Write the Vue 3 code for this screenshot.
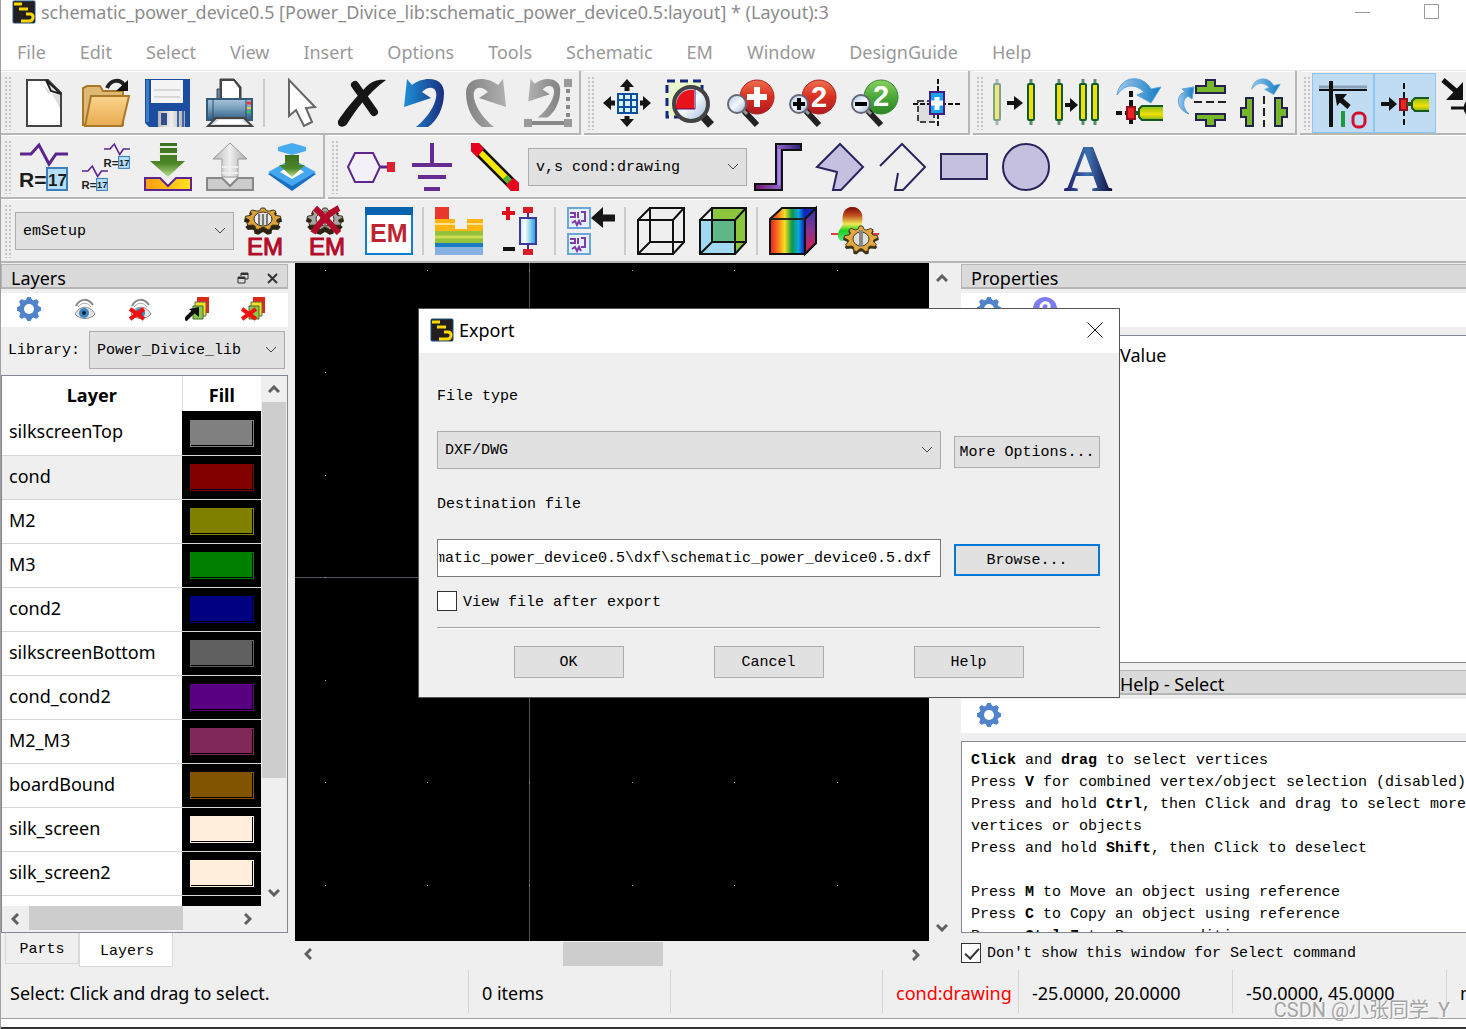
<script setup>
import { onMounted, ref } from 'vue'

const menus = ['File', 'Edit', 'Select', 'View', 'Insert', 'Options', 'Tools', 'Schematic', 'EM', 'Window', 'DesignGuide', 'Help']

// Outline of a cog wheel: n teeth between the root radii (inner share k) and the tip radii
const cog = (cx, cy, rx, ry, n, k) => {
  const pts = []
  for (let i = 0; i < n * 4; i++) {
    const angle = ((i - 0.5) / (n * 4)) * Math.PI * 2
    const r = i % 4 < 2 ? 1 : k
    pts.push(`${(cx + Math.sin(angle) * rx * r).toFixed(1)} ${(cy - Math.cos(angle) * ry * r).toFixed(1)}`)
  }
  return `M${pts.join('L')}Z`
}

const gear = (color) =>
  `<path d="${cog(12, 12, 12, 12, 8, 0.78)}" fill="${color}" stroke="${color}" stroke-width="1"/><circle cx="12" cy="12" r="5" fill="#fff"/>`

const emGear = (color) =>
  `<path d="${cog(22, 15, 18, 12, 9, 0.78)}" fill="#2c2412" stroke="#2c2412" stroke-width="2"/><path d="${cog(22, 12, 18, 11, 9, 0.78)}" fill="${color}" stroke="#3c3016" stroke-width="1"/><ellipse cx="22" cy="12" rx="9" ry="7" fill="#eee" stroke="#3c3016" stroke-width="1"/><path d="M17 7H27V18H17Z" fill="#777"/><path d="M20 6V18M24 6V18" stroke="#ddd" stroke-width="2"/>`

const lens = (sign) =>
  `<path d="M17 32L30 46" stroke="#222" stroke-width="6"/><path d="M15 30L20 35" stroke="#999" stroke-width="3"/><circle cx="10" cy="25" r="9" fill="url(#glass)" stroke="#667" stroke-width="2"/>${sign}`

const resistor = (x, y, s) =>
  `<g transform="translate(${x} ${y}) scale(${s})"><path d="M0 11H11L19 2L29 21L36 11H48" fill="none" stroke="#5c2590" stroke-width="3"/><rect x="27" y="25" width="20" height="22" fill="#b5dff8" stroke="#3c80c0" stroke-width="2"/><text x="-1" y="44" font-size="21" font-weight="700" fill="#1c1c1c">R=</text><text x="28" y="43" font-size="17" font-weight="700" fill="#1c1c1c">17</text></g>`

const strip = (x, o = 1) =>
  `<g opacity="${o}"><path d="M${x} 0V46" stroke="#5d8a6b" stroke-width="3"/><rect x="${x - 4}" y="4" width="8" height="38" rx="2" fill="#0c5c2c"/><rect x="${x - 2}" y="6" width="4" height="34" fill="#f5dd0a"/></g>`

const cubeLines = '<path d="M1 13H36V47H1ZM13 1H47V35H13ZM1 13L13 1M36 13L47 1M1 47L13 35M36 47L47 35" fill="none" stroke="#111" stroke-width="2"/>'
const chip = (y) =>
  `<rect x="1" y="${y}" width="22" height="20" fill="#e4f1fb" stroke="#6aa5dc" stroke-width="2"/><path d="M3 ${y + 5}H8V${y + 9}H3M11 ${y + 10}V${y + 4}M14 ${y + 4}H18V${y + 13}H14M5 ${y + 15}L8 ${y + 13}L10 ${y + 17}L12 ${y + 13}L14 ${y + 17}" fill="none" stroke="#7f3ca8" stroke-width="2"/>`
const undoShape = 'M7 0L12 6C23 -3 44 -3 44 14C44 29 37 42 28 48H16C29 38 38 22 36 13C34 7 27 8 22 13L31 19L4 28Z'
const swoopPath = 'M1 16C4 -4 27 -5 35 10L45 8L35 24L21 16L28 13C20 5 9 4 1 16Z'
const swoop = `<path d="${swoopPath}" fill="url(#sky)" stroke="#5ba4d8"/>`

const icons = {
  file: '<path d="M7 1H28L41 14V47H7Z" fill="#fff" stroke="#444" stroke-width="2"/><path d="M22 4L28 14L40 16V30C36 20 30 12 22 4Z" fill="#ddd"/><path d="M26 1L41 15L31 12Z" fill="#eee" stroke="#222" stroke-width="2"/>',
  open: '<path d="M1 46V9L5 7H18L21 12H41V46Z" fill="#dfb873" stroke="#a97828" stroke-width="2"/><path d="M9 17H47L40 47H3Z" fill="url(#folder)" stroke="#a97828" stroke-width="2"/><path d="M25 9C29 0 38 0 42 6" fill="none" stroke="#222" stroke-width="4"/><path d="M46 1V12H34Z" fill="#111"/>',
  save: '<path d="M1 0H46V48H5L1 44Z" fill="#1b4e9f"/><path d="M2 1H5V43H2Z" fill="#3f7cc8"/><path d="M7 1H39V24H7Z" fill="#f4f4f4"/><path d="M10 11H36M10 18H36" stroke="#bbb"/><path d="M14 32H41V48H14Z" fill="url(#silver)"/><path d="M17 34H23V46H17Z" fill="#334a8c"/><path d="M34 32V48M39 32V48" stroke="#4363aa" stroke-width="2"/>',
  print: '<path d="M11 20V10H14V0H28L35 8V20" fill="#5a87a8" stroke="#444" stroke-width="1"/><path d="M15 20V1H28L34 9V20Z" fill="#fff" stroke="#444" stroke-width="2"/><rect x="1" y="20" width="45" height="21" fill="url(#steel)" stroke="#345a78" stroke-width="2"/><path d="M7 20V40M40 20V40" stroke="#2b4a66"/><path d="M41 24H45" stroke="#f33" stroke-width="3"/><path d="M41 29H45" stroke="#ec3" stroke-width="2"/><path d="M41 33H45" stroke="#2c4" stroke-width="2"/><path d="M10 39H38L46 47H2Z" fill="#ddd" stroke="#444" stroke-width="2"/><path d="M13 41H36L40 45H8Z" fill="#fff"/>',
  cursor: '<path d="M13 1V37L20 31L28 47L36 43L30 29L39 28Z" fill="#fff" stroke="#666" stroke-width="2"/>',
  delete: '<path d="M17 6L36 33" fill="none" stroke="#161616" stroke-width="8" stroke-linecap="round"/><path d="M48 1C40 0 34 2 28 8C18 18 6 32 0 42C-1 49 6 49 9 45C17 32 30 14 48 1Z" fill="#161616"/>',
  undo: `<path d="${undoShape}" fill="url(#blue)"/>`,
  redo: `<path transform="translate(48 0) scale(-1 1)" d="${undoShape}" fill="url(#gray)"/>`,
  undoSel: `<path transform="translate(1 0) scale(.8)" d="${undoShape}" fill="url(#gray)"/><path d="M44 10V40" stroke="#888" stroke-width="4" stroke-dasharray="4 4"/><path d="M6 44H44" stroke="#888" stroke-width="4"/><path d="M40 0H48V8H40ZM40 40H48V48H40ZM0 40H8V48H0Z" fill="#999"/>`,
  fit: '<rect x="15" y="15" width="19" height="19" fill="#d8f4fa" stroke="#0d4ea0" stroke-width="2"/><path d="M21 15V34M28 15V34M15 21H34M15 28H34" stroke="#0d4ea0" stroke-width="2"/><path d="M24 12V5M24 37V44M12 24H5M37 24H44" stroke="#161616" stroke-width="5"/><path d="M24 0L31 8H17ZM24 48L17 40H31ZM0 24L8 17V31ZM48 24L40 31V17Z" fill="#161616"/>',
  zoomArea: '<rect x="2" y="2" width="35" height="36" fill="#eaf6cc" stroke="#142580" stroke-width="3" stroke-dasharray="8 5"/><path d="M37 36L46 46" stroke="#222" stroke-width="8"/><circle cx="26" cy="25" r="17" fill="url(#glass)" stroke="#444" stroke-width="4"/><path d="M29 30V11C18 9 10 18 11 30Z" fill="#e8121c"/><path d="M30 10V30H11" fill="none" stroke="#5a1060" stroke-width="1"/>',
  zoomIn: `<circle cx="30" cy="18" r="17" fill="url(#red)" stroke="#a22" stroke-width="1"/><path d="M30 8V28M20 18H40" stroke="#fff" stroke-width="6"/>${lens('')}`,
  zoomIn2: `<circle cx="30" cy="18" r="17" fill="url(#red)" stroke="#a22" stroke-width="1"/><text x="22" y="28" font-size="29" font-weight="700" fill="#fff">2</text>${lens('<path d="M10 19V31M4 25H16" stroke="#000" stroke-width="4"/>')}`,
  zoomOut2: `<circle cx="30" cy="18" r="17" fill="url(#green)" stroke="#383" stroke-width="1"/><text x="22" y="27" font-size="29" font-weight="700" fill="#fff">2</text>${lens('<path d="M4 25H16" stroke="#000" stroke-width="4"/>')}`,
  center: '<rect x="5" y="22" width="16" height="21" fill="#ddd" stroke="#444" stroke-width="2" stroke-dasharray="6 3"/><path d="M25 0V48M0 25H48" stroke="#111" stroke-width="2" stroke-dasharray="5 2"/><rect x="17" y="13" width="14" height="22" fill="#16a4ee" stroke="#4a1c80" stroke-width="2"/><path d="M24 18V31M18 24H30" stroke="#fff" stroke-width="5"/>',
  stripOne: `${strip(5, 0.5)}<path d="M15 24H24" stroke="#111" stroke-width="4"/><path d="M22 17L31 24L22 31Z" fill="#111"/>${strip(39)}`,
  stripTwo: `${strip(5)}<path d="M11 26H18" stroke="#111" stroke-width="4"/><path d="M16 19L24 26L16 33Z" fill="#111"/>${strip(29)}${strip(41)}`,
  rotate: `${swoop}<path d="M15 12V48M0 34H12" stroke="#111" stroke-width="4" stroke-dasharray="6 3"/><rect x="11" y="28" width="8" height="12" fill="#e22" stroke="#901020" stroke-width="2"/><path d="M19 34H26" stroke="#175a20" stroke-width="4"/><path d="M47 27H26L23 30V38L26 41H47" fill="url(#pad)" stroke="#175a20" stroke-width="2"/>`,
  flipV: '<path d="M11 35C-3 30 -2 15 7 13L4 10L16 8L14 20L10 17C4 20 4 29 11 35Z" fill="url(#sky)" stroke="#5ba4d8"/><path d="M18 7H28V1H37V7H47V14H18ZM18 35H47V41H37V47H28V41H18Z" fill="#76b82a" stroke="#252050" stroke-width="2"/><path d="M16 23H48" stroke="#222" stroke-width="2" stroke-dasharray="8 4"/>',
  flipH: `<g transform="translate(11 0) scale(.65)">${swoop}</g><path d="M13 19V47H6V38H1V29H6V19ZM35 19V47H42V38H47V29H42V19Z" fill="#76b82a" stroke="#252050" stroke-width="2"/><path d="M24 17V48" stroke="#222" stroke-width="2" stroke-dasharray="8 4"/>`,
  origin: '<path d="M0 8H48" stroke="#8aa2b8" stroke-width="3"/><path d="M0 11H48" stroke="#111" stroke-width="2"/><path d="M12 2V48" stroke="#111" stroke-width="4"/><path d="M30 28L22 21" stroke="#111" stroke-width="5"/><path d="M16 15H28L18 27Z" fill="#111"/><path d="M24 32V48" stroke="#1c9a40" stroke-width="4"/><rect x="34" y="34" width="12" height="14" rx="5" fill="none" stroke="#d01030" stroke-width="3"/>',
  snap: '<path d="M23 4V48" stroke="#111" stroke-width="2" stroke-dasharray="6 3"/><path d="M0 25H9" stroke="#111" stroke-width="4"/><path d="M8 18L16 25L8 32Z" fill="#111"/><rect x="19" y="20" width="7" height="11" fill="#e22" stroke="#901020" stroke-width="2"/><path d="M26 25H33" stroke="#175a20" stroke-width="4"/><path d="M48 19H34L31 22V29L34 32H48" fill="url(#pad)" stroke="#175a20" stroke-width="2"/>',
  snapEdge: '<path d="M0 1L14 13" stroke="#111" stroke-width="5"/><path d="M20 3V21H3Z" fill="#111"/><path d="M8 29H24" stroke="#111" stroke-width="3"/><circle cx="30" cy="29" r="8" fill="#fff" stroke="#111" stroke-width="3"/>',
  value: resistor(0, 0, 1),
  values: `${resistor(22, 0, 0.54)}${resistor(0, 22, 0.54)}`,
  push: '<path d="M16 0H33V18H41L24 34L6 18H16Z" fill="url(#arrow)"/><path d="M15 4H34M15 11H34" stroke="#e0ecd8" stroke-width="2"/><path d="M1 35H16L24 43L32 35H47V47H1Z" fill="url(#gold)" stroke="#5c2590" stroke-width="2"/>',
  pop: '<path d="M24 0L41 16H32V34H16V16H7Z" fill="url(#silver)" stroke="#999"/><path d="M16 24H32M16 30H32" stroke="#eee" stroke-width="2"/><path d="M1 35H16L24 43L32 35H47V47H1Z" fill="#ccc" stroke="#888" stroke-width="2"/>',
  pushAll: '<path d="M0 31L24 18L48 31L24 48Z" fill="#1b6fc0"/><path d="M0 29L24 16L48 29L24 43Z" fill="#45a8ee"/><path d="M12 29L24 21L36 29L24 36Z" fill="#fff"/><path d="M10 4L24 0L38 4V8L24 12L10 8Z" fill="#46abef"/><path d="M17 12H31V22H37L24 34L11 22H17Z" fill="url(#arrow)"/>',
  pin: '<path d="M1 24L8 10H26L33 24L26 39H8Z" fill="#f4f0f8" stroke="#5c2590" stroke-width="2"/><path d="M33 24H42" stroke="#5c2590" stroke-width="3"/><rect x="40" y="19" width="8" height="10" fill="#e02030"/>',
  ground: '<path d="M23 0V21" stroke="#652d91" stroke-width="4"/><path d="M3 22H43M9 34H37M15 46H31" stroke="#652d91" stroke-width="4"/>',
  trace: '<path d="M4 4L44 44" stroke="#111" stroke-width="11"/><path d="M6 6L42 42" stroke="#f2e800" stroke-width="6"/><path d="M34 34L40 40" stroke="#50b030" stroke-width="6"/><path d="M0 0H8L13 6L6 14L0 8ZM48 48H40L35 42L42 35L48 40Z" fill="#e8001c"/>',
  path: '<path d="M0 44H25V4H48" fill="none" stroke="#111" stroke-width="8"/><path d="M2 44H25V4H46" fill="none" stroke="url(#violet)" stroke-width="4"/><path d="M25 42V6" stroke="#a487e8" stroke-width="3"/>',
  polygon: '<path d="M24 1L47 24L25 47H17L21 29L1 24Z" fill="#c5c0e0" stroke="#29255c" stroke-width="2"/>',
  polyline: '<path d="M2 23L24 1L47 24L25 47H17L20 30" fill="none" stroke="#29255c" stroke-width="2"/>',
  rect: '<rect x="1" y="11" width="46" height="25" fill="#c5c0e0" stroke="#29255c" stroke-width="2"/>',
  circle: '<circle cx="24" cy="24" r="23" fill="#c5c0e0" stroke="#29255c" stroke-width="2"/>',
  text: '<text x="24" y="48" text-anchor="middle" class="serif" font-size="68" font-weight="700" fill="url(#ink)">A</text>',
  em: `${emGear('#d9a13c')}<text x="6" y="48" font-size="24" fill="#b20a28" stroke="#b20a28">EM</text>`,
  emStop: `${emGear('#a5a5a5')}<path d="M12 1C20 8 28 18 36 26M36 1C26 6 16 16 10 26" fill="none" stroke="#b20a28" stroke-width="6"/><text x="6" y="48" font-size="24" fill="#b20a28" stroke="#b20a28">EM</text>`,
  emWin: '<rect x="1" y="1" width="46" height="46" fill="#fff" stroke="#0f7fd5" stroke-width="2"/><path d="M0 0H48V8H0Z" fill="#0763ad"/><text x="5" y="35" font-size="25" font-weight="700" fill="#bd2532">EM</text>',
  substrate: '<path d="M0 0H14V12H0Z" fill="#e8382c"/><path d="M0 12H20V22H32V12H48V24H0Z" fill="#fdb515"/><path d="M0 17H20M32 17H48" stroke="#ffe08a" stroke-width="2"/><path d="M0 24H48V36H0Z" fill="#93c23d"/><path d="M0 30H48" stroke="#cddc50" stroke-width="3"/><path d="M0 36H48V48H0Z" fill="#86b2e2"/><path d="M0 38H48" stroke="#1c7cc2" stroke-width="4"/>',
  port: '<path d="M5 6H18M11 0V13" stroke="#e01020" stroke-width="4"/><path d="M6 42H18" stroke="#111" stroke-width="4"/><path d="M31 4V44" stroke="#5c2590" stroke-width="2"/><path d="M26 0H36V6H26ZM26 42H36V48H26Z" fill="#d81c28"/><rect x="23" y="11" width="16" height="26" fill="url(#glassbar)" stroke="#3a3a9c" stroke-width="2"/>',
  compare: `${chip(1)}${chip(27)}<path d="M34 11H48" stroke="#161616" stroke-width="7"/><path d="M24 11L36 0V21Z" fill="#161616"/>`,
  wire: cubeLines,
  solid: `<path d="M13 1H47V35L36 47V13H13Z" fill="#8cc63f"/><path d="M1 13H13V47H1Z" fill="#a0d8f0"/><path d="M13 13H36V35H13Z" fill="#60b888"/><path d="M13 35H36V47H13Z" fill="#a0d8f0"/>${cubeLines}`,
  rainbow: '<path d="M1 12L13 1H47V36L36 47H1Z" fill="url(#rainbow)" stroke="#111" stroke-width="2"/><path d="M36 12L47 1V36L36 47Z" fill="url(#side)" stroke="#111" stroke-width="2"/><path d="M1 12H36" stroke="#222" stroke-width="2"/>',
  farField: `<path d="M0 27H48" stroke="#e04040" stroke-width="2"/><path d="M10 34C4 30 8 22 12 18C10 6 14 0 21 0C30 0 34 8 30 20L36 32Z" fill="url(#lobe)"/><path d="${cog(30, 34, 18, 14, 9, 0.76)}" fill="#3c3016"/><path d="${cog(30, 32, 17, 13, 9, 0.76)}" fill="#e0a840" stroke="#4b3718"/><ellipse cx="30" cy="32" rx="8" ry="7" fill="#ddd" stroke="#4b3718"/><path d="M28 23H32V40H28Z" fill="#888"/>`
}

const fileGroup = ['file', 'open', 'save', 'print', '|', 'cursor', 'delete', 'undo', 'redo', 'undoSel']
const zoomGroup = ['fit', 'zoomArea', 'zoomIn', 'zoomIn2', 'zoomOut2', 'center']
const editGroup = ['stripOne', 'stripTwo', 'rotate', 'flipV', 'flipH']
const snapGroup = ['origin', 'snap', 'snapEdge']
const topGroups = [fileGroup, zoomGroup, editGroup, snapGroup]
const valueGroup = ['value', 'values', 'push', 'pop', 'pushAll']
const wireGroup = ['pin', 'ground', 'trace']
const shapeGroup = ['path', 'polygon', 'polyline', 'rect', 'circle', 'text']
const emGroup = ['em', 'emStop', 'emWin', '|', 'substrate', 'port', '|', 'compare', '|', 'wire', 'solid', '|', 'rainbow', 'farField']

const eye = '<path d="M3 9C7 1 15 1 20 8" fill="none" stroke="#888" stroke-width="2"/><path d="M5 10C9 5 14 5 18 10" fill="none" stroke="#aaa" stroke-width="1"/><path d="M2 17C7 8 17 8 22 17C17 23 7 23 2 17Z" fill="#e4e4e4" stroke="#888" stroke-width="1"/><circle cx="11" cy="16" r="5" fill="#3c88c0"/><circle cx="11" cy="16" r="2" fill="#123"/>'
const stack = '<path d="M12 0H24V16H12Z" fill="#e02818"/><path d="M10 5H21V19H10Z" fill="#f4e020" stroke="#665"/><path d="M8 9H18V22H8Z" fill="#8ac850" stroke="#486a2a"/>'
const redX = '<path d="M1 12L15 22M15 12L1 22" stroke="#f01010" stroke-width="4"/>'
const layerTools = [
  gear('#5083cc'),
  eye,
  eye + redX,
  stack + '<path d="M0 23L9 14" stroke="#111" stroke-width="4"/><path d="M14 10V20L4 12Z" fill="#111"/>',
  stack + redX
]

const layers = [
  ['silkscreenTop', '#808080'],
  ['cond', '#800000'],
  ['M2', '#808000'],
  ['M3', '#008000'],
  ['cond2', '#000080'],
  ['silkscreenBottom', '#606060'],
  ['cond_cond2', '#580080'],
  ['M2_M3', '#802858'],
  ['boardBound', '#805400'],
  ['silk_screen', '#ffeedc'],
  ['silk_screen2', '#ffeedc']
]

const gridX = [30, 132, 234, 337, 439, 542]
const gridY = [7, 109, 212, 314, 417, 519, 622]

const destination = ref('matic_power_device0.5\\dxf\\schematic_power_device0.5.dxf')
const destInput = ref(null)
const viewAfter = ref(false)
const hideHelp = ref(true)

onMounted(() => {
  destInput.value.scrollLeft = destInput.value.scrollWidth
})
</script>

<template>
  <div class="window">
    <svg class="defs" width="0" height="0" aria-hidden="true">
      <defs>
        <linearGradient id="folder" x2="0" y2="1"><stop stop-color="#fbd48c" /><stop offset="1" stop-color="#e8aa50" /></linearGradient>
        <linearGradient id="silver"><stop stop-color="#b8b8b8" /><stop offset=".5" stop-color="#eee" /><stop offset="1" stop-color="#aaa" /></linearGradient>
        <linearGradient id="steel" x2="0" y2="1"><stop stop-color="#a8c4da" /><stop offset=".4" stop-color="#7ea4c2" /><stop offset="1" stop-color="#2f5c80" /></linearGradient>
        <linearGradient id="blue"><stop stop-color="#1c90d8" /><stop offset="1" stop-color="#1c2e80" /></linearGradient>
        <linearGradient id="gray"><stop stop-color="#b0b0b0" /><stop offset="1" stop-color="#828282" /></linearGradient>
        <linearGradient id="sky"><stop stop-color="#a0c8ec" /><stop offset="1" stop-color="#0f7cc4" /></linearGradient>
        <linearGradient id="glass" x2="1" y2="1"><stop stop-color="#aac8e4" /><stop offset=".5" stop-color="#f2f8fd" /><stop offset="1" stop-color="#9db4d4" /></linearGradient>
        <linearGradient id="red" x2="0" y2="1"><stop stop-color="#f07050" /><stop offset=".5" stop-color="#d83020" /><stop offset="1" stop-color="#b01820" /></linearGradient>
        <linearGradient id="green" x2="0" y2="1"><stop stop-color="#8cd060" /><stop offset=".5" stop-color="#4aa838" /><stop offset="1" stop-color="#2c8424" /></linearGradient>
        <linearGradient id="pad" x2="0" y2="1"><stop stop-color="#8cc020" /><stop offset=".6" stop-color="#f2e000" /><stop offset="1" stop-color="#80b420" /></linearGradient>
        <linearGradient id="arrow" x2="0" y2="1"><stop stop-color="#3c7020" /><stop offset=".6" stop-color="#4c8428" /><stop offset="1" stop-color="#b8e08c" /></linearGradient>
        <linearGradient id="gold"><stop stop-color="#ff9c10" /><stop offset="1" stop-color="#ffe020" /></linearGradient>
        <linearGradient id="violet"><stop stop-color="#701870" /><stop offset=".5" stop-color="#9060c8" /><stop offset="1" stop-color="#2c2878" /></linearGradient>
        <linearGradient id="ink"><stop stop-color="#201868" /><stop offset=".5" stop-color="#3c70b0" /><stop offset="1" stop-color="#100838" /></linearGradient>
        <linearGradient id="glassbar"><stop stop-color="#c8e4f4" /><stop offset=".3" stop-color="#fff" /><stop offset="1" stop-color="#10a0dc" /></linearGradient>
        <linearGradient id="rainbow"><stop stop-color="#e81c24" /><stop offset=".18" stop-color="#f87c1c" /><stop offset=".32" stop-color="#f8e020" /><stop offset=".48" stop-color="#089848" /><stop offset=".62" stop-color="#08a8e0" /><stop offset=".74" stop-color="#1028c0" /></linearGradient>
        <linearGradient id="side" x2="0" y2="1"><stop stop-color="#3038b0" /><stop offset=".5" stop-color="#8c3090" /><stop offset="1" stop-color="#e02040" /></linearGradient>
        <linearGradient id="lobe" x2="0" y2="1"><stop stop-color="#7c0800" /><stop offset=".25" stop-color="#c05020" /><stop offset=".5" stop-color="#f0e850" /><stop offset=".7" stop-color="#18d020" /><stop offset="1" stop-color="#58e888" /></linearGradient>
      </defs>
    </svg>

    <header class="titlebar">
      <svg class="logo" viewBox="0 0 24 24"><rect x="1" y="1" width="22" height="22" rx="1" fill="#231f20" stroke="#1c5078" stroke-width="1" /><path d="M2 4H10M7 9H16M14 14H18Q21 14 21 17Q21 21 17 21H9" fill="none" stroke="#ffd800" stroke-width="3" /></svg>
      <span class="caption">schematic_power_device0.5 [Power_Divice_lib:schematic_power_device0.5:layout] * (Layout):3</span>
      <button class="winbtn" aria-label="Minimize"><svg width="16" height="16" viewBox="0 0 16 16"><path d="M0 8.5H15" stroke="#999" /></svg></button>
      <button class="winbtn" aria-label="Maximize"><svg width="16" height="16" viewBox="0 0 16 16"><path d="M.5 .5H14.5V14.5H.5Z" fill="none" stroke="#999" /></svg></button>
    </header>

    <nav class="menubar">
      <button v-for="m in menus" :key="m">{{ m }}</button>
    </nav>

    <div class="toolrow">
      <div v-for="(group, g) in topGroups" :key="g" class="bar" :class="{ last: g === 3 }">
        <span class="grip"></span>
        <template v-for="(name, i) in group" :key="i">
          <span v-if="name === '|'" class="sep"></span>
          <button v-else class="tool" :class="{ active: name === 'origin' || name === 'snap' }" :aria-label="name"><svg viewBox="0 0 48 48" v-html="icons[name]"></svg></button>
        </template>
      </div>
    </div>

    <div class="toolrow">
      <div class="bar">
        <span class="grip"></span>
        <button v-for="name in valueGroup" :key="name" class="tool" :aria-label="name"><svg viewBox="0 0 48 48" v-html="icons[name]"></svg></button>
      </div>
      <div class="bar last">
        <span class="grip"></span>
        <button v-for="name in wireGroup" :key="name" class="tool" :aria-label="name"><svg viewBox="0 0 48 48" v-html="icons[name]"></svg></button>
        <div class="combo toolcombo">
          <select aria-label="Entry layer"><option>v,s cond:drawing</option></select>
          <svg viewBox="0 0 12 8"><path d="M1 1L6 6L11 1" /></svg>
        </div>
        <button v-for="name in shapeGroup" :key="name" class="tool" :aria-label="name"><svg viewBox="0 0 48 48" v-html="icons[name]"></svg></button>
      </div>
    </div>

    <div class="toolrow">
      <div class="bar last">
        <span class="grip"></span>
        <div class="combo toolcombo">
          <select aria-label="EM setup"><option>emSetup</option></select>
          <svg viewBox="0 0 12 8"><path d="M1 1L6 6L11 1" /></svg>
        </div>
        <template v-for="(name, i) in emGroup" :key="i">
          <span v-if="name === '|'" class="sep"></span>
          <button v-else class="tool" :aria-label="name"><svg viewBox="0 0 48 48" v-html="icons[name]"></svg></button>
        </template>
      </div>
    </div>

    <main class="work">
      <aside class="left">
        <div class="dockhead">
          <span>Layers</span>
          <button aria-label="Float"><svg width="12" height="12" viewBox="0 0 12 12"><path d="M4 4V1H11V7H8M1 5H8V11H1Z" fill="none" stroke="#333" stroke-width="1" /><path d="M4 2H11M1 6H8" stroke="#333" stroke-width="2" /></svg></button>
          <button aria-label="Close"><svg width="12" height="12" viewBox="0 0 12 12"><path d="M1 2L10 11M10 2L1 11" stroke="#333" stroke-width="2" /></svg></button>
        </div>
        <div class="minibar">
          <button v-for="(t, i) in layerTools" :key="i" aria-label="Layer tool"><svg viewBox="0 0 24 24" v-html="t"></svg></button>
        </div>
        <div class="library">
          <label for="library">Library:</label>
          <div class="combo">
            <select id="library"><option>Power_Divice_lib</option></select>
            <svg viewBox="0 0 12 8"><path d="M1 1L6 6L11 1" /></svg>
          </div>
        </div>
        <div class="layerbox">
          <div class="layerview">
            <table>
              <thead><tr><th>Layer</th><th class="fillcol">Fill</th></tr></thead>
              <tbody>
                <tr v-for="[name, color] in layers" :key="name" :class="{ picked: name === 'cond' }">
                  <td>{{ name }}</td>
                  <td class="fill"><span class="swatch" :style="{ color }"></span></td>
                </tr>
                <tr><td></td><td class="fill"></td></tr>
              </tbody>
            </table>
          </div>
          <div class="vscroll">
            <button aria-label="Scroll up"><svg viewBox="0 0 12 8"><path d="M1 7L6 2L11 7" /></svg></button>
            <span class="thumb"></span>
            <button aria-label="Scroll down"><svg viewBox="0 0 12 8"><path d="M1 1L6 6L11 1" /></svg></button>
          </div>
          <div class="hscroll">
            <button aria-label="Scroll left"><svg viewBox="0 0 8 12"><path d="M7 1L2 6L7 11" /></svg></button>
            <span class="thumb"></span>
            <button aria-label="Scroll right"><svg viewBox="0 0 8 12"><path d="M1 1L6 6L1 11" /></svg></button>
          </div>
        </div>
        <div class="tabs">
          <button>Parts</button>
          <button class="on">Layers</button>
        </div>
      </aside>

      <section class="canvas">
        <svg class="drawing">
          <path d="M234.5 0V2000M0 314.5H3000" stroke="#465658" />
          <template v-for="y in gridY" :key="y">
            <rect v-for="x in gridX" :key="x" :x="x" :y="y" width="1" height="1" fill="#aaa" />
          </template>
        </svg>
        <div class="vscroll">
          <button aria-label="Scroll up"><svg viewBox="0 0 12 8"><path d="M1 7L6 2L11 7" /></svg></button>
          <span class="thumb"></span>
          <button aria-label="Scroll down"><svg viewBox="0 0 12 8"><path d="M1 1L6 6L11 1" /></svg></button>
        </div>
        <div class="hscroll">
          <button aria-label="Scroll left"><svg viewBox="0 0 8 12"><path d="M7 1L2 6L7 11" /></svg></button>
          <span class="thumb"></span>
          <button aria-label="Scroll right"><svg viewBox="0 0 8 12"><path d="M1 1L6 6L1 11" /></svg></button>
        </div>
      </section>

      <aside class="right">
        <div class="dockhead"><span>Properties</span></div>
        <div class="minibar">
          <button aria-label="Settings"><svg viewBox="0 0 24 24" v-html="layerTools[0]"></svg></button>
          <button aria-label="About"><svg viewBox="0 0 24 24"><circle cx="12" cy="12" r="12" fill="#7c7cf0" /><path d="M8 12C7 4 17 4 16 10C16 13 12 13 12 16" fill="none" stroke="#fff" stroke-width="3" /></svg></button>
        </div>
        <div class="props"><span>Value</span></div>
        <div class="dockhead helphead"><span>Help - Select</span></div>
        <div class="minibar">
          <button aria-label="Help settings"><svg viewBox="0 0 24 24" v-html="layerTools[0]"></svg></button>
        </div>
        <div class="helptext">
          <p><b>Click</b> and <b>drag</b> to select vertices</p>
          <p>Press <b>V</b> for combined vertex/object selection (disabled)</p>
          <p>Press and hold <b>Ctrl</b>, then Click and drag to select more<br />vertices or objects</p>
          <p>Press and hold <b>Shift</b>, then Click to deselect</p>
          <p>&nbsp;</p>
          <p>Press <b>M</b> to Move an object using reference</p>
          <p>Press <b>C</b> to Copy an object using reference</p>
          <p>Press <b>Ctrl-Z</b> to Reverse editing</p>
        </div>
        <label class="check"><input v-model="hideHelp" type="checkbox" /><span>Don't show this window for Select command</span></label>
      </aside>
    </main>

    <footer class="status">
      <span class="hint">Select: Click and drag to select.</span>
      <span class="items">0 items</span>
      <span class="blank"></span>
      <span class="layer">cond:drawing</span>
      <span class="coord">-25.0000, 20.0000</span>
      <span class="coord">-50.0000, 45.0000</span>
      <span class="unit">mm</span>
    </footer>
    <div class="edge"></div>

    <section class="dialog" role="dialog" aria-labelledby="dlg-title">
      <header>
        <svg class="logo" viewBox="0 0 24 24"><rect x="1" y="1" width="22" height="22" rx="1" fill="#231f20" stroke="#1c5078" stroke-width="1" /><path d="M2 4H10M7 9H16M14 14H18Q21 14 21 17Q21 21 17 21H9" fill="none" stroke="#ffd800" stroke-width="3" /></svg>
        <span id="dlg-title">Export</span>
        <button aria-label="Close"><svg width="16" height="16" viewBox="0 0 16 16"><path d="M.5 .5L15.5 15.5M15.5 .5L.5 15.5" stroke="#111" /></svg></button>
      </header>
      <form @submit.prevent>
        <label for="type">File type</label>
        <div class="line">
          <div class="combo">
            <select id="type"><option>DXF/DWG</option></select>
            <svg viewBox="0 0 12 8"><path d="M1 1L6 6L11 1" /></svg>
          </div>
          <button type="button" class="push">More Options...</button>
        </div>
        <label for="dest">Destination file</label>
        <div class="line">
          <input id="dest" ref="destInput" v-model="destination" type="text" />
          <button type="button" class="push focus">Browse...</button>
        </div>
        <label class="check"><input v-model="viewAfter" type="checkbox" /><span>View file after export</span></label>
        <hr />
        <div class="actions">
          <button type="submit" class="push">OK</button>
          <button type="button" class="push">Cancel</button>
          <button type="button" class="push">Help</button>
        </div>
      </form>
    </section>

    <span class="watermark">CSDN @小张同学_Y</span>
  </div>
</template>

<style>
body {
  margin: 0;
  background: #efefef;
}
svg text {
  font-family: "Liberation Sans", sans-serif;
}
svg text.serif {
  font-family: "Liberation Serif", serif;
}
</style>

<style scoped>
* {
  box-sizing: border-box;
}
.window {
  position: relative;
  display: flex;
  flex-direction: column;
  height: 100vh;
  overflow: hidden;
  border-left: 1px solid #a0a0a0;
  background: #efefef;
  color: #000;
  font: 18px/24px "Noto Sans", sans-serif;
}
.defs {
  position: absolute;
}
button {
  margin: 0;
  padding: 0;
  border: 0;
  background: none;
  color: inherit;
  font: inherit;
}
.logo {
  width: 24px;
  height: 24px;
  flex: none;
}
.titlebar {
  display: flex;
  align-items: center;
  height: 26px;
  padding: 0 0 2px 11px;
  background: #fff;
  color: #8c8c8c;
  flex: none;
}
.caption {
  flex: 1;
  margin-left: 5px;
  white-space: nowrap;
}
.winbtn {
  width: 69px;
  height: 16px;
  text-align: center;
  line-height: 0;
}
.menubar {
  display: flex;
  gap: 34px;
  height: 45px;
  padding: 7px 16px 0;
  border-bottom: 1px solid #e6e6e6;
  background: #fff;
  color: #999;
  flex: none;
}
.toolrow {
  display: flex;
  gap: 3px;
  height: 64px;
  flex: none;
  overflow: hidden;
}
.bar {
  display: flex;
  align-items: center;
  border: solid #b6b6b6;
  border-width: 0 2px 2px 0;
  box-shadow: inset 0 1px #fff;
  flex: none;
  padding-top: 2px;
}
.bar.last {
  flex: 1 0 auto;
  border-right: 0;
}
.grip {
  width: 8px;
  height: 54px;
  margin: 0 1px 0 3px;
  background: radial-gradient(circle, #c4c4c4 1px, transparent 1px) 0 0 / 4px 4px;
}
.tool {
  width: 62px;
  height: 60px;
  padding: 6px 7px;
  flex: none;
}
.tool svg {
  display: block;
  width: 48px;
  height: 48px;
  overflow: visible;
}
.tool.active {
  border: 1px solid #8fc6f2;
  padding: 5px 6px;
  background: #bfdcf3;
}
.sep {
  width: 2px;
  height: 48px;
  margin: 0 4px 0 2px;
  background: #ccc;
}
.combo {
  position: relative;
  height: 38px;
  font: 15px/20px "Liberation Mono", monospace;
}
.combo select {
  width: 100%;
  height: 100%;
  padding: 1px 30px 0 7px;
  border: 1px solid #acacac;
  border-radius: 0;
  background: #e1e1e1;
  color: #000;
  font: inherit;
  appearance: none;
}
.combo svg {
  position: absolute;
  right: 8px;
  top: 15px;
  width: 12px;
  height: 8px;
  fill: none;
  stroke: #444;
  stroke-width: 1;
  pointer-events: none;
}
.toolcombo {
  width: 219px;
  margin-left: 2px;
  flex: none;
}
.work {
  display: flex;
  flex: 1;
  min-height: 0;
}
.left {
  display: flex;
  flex-direction: column;
  width: 287px;
  flex: none;
  padding-top: 1px;
}
.dockhead {
  display: flex;
  align-items: center;
  gap: 18px;
  height: 25px;
  padding: 3px 8px 0 9px;
  border: 2px solid #b6b6b6;
  border-width: 1px 1px 2px;
  background: #dadada;
  flex: none;
}
.dockhead span {
  flex: 1;
}
.dockhead button {
  line-height: 0;
}
.minibar {
  display: flex;
  gap: 32px;
  height: 34px;
  margin-top: 4px;
  padding: 4px 16px;
  background: #fff;
  flex: none;
}
.minibar button {
  width: 24px;
  height: 24px;
}
.minibar svg {
  display: block;
  width: 24px;
  height: 24px;
}
.library {
  display: flex;
  align-items: center;
  justify-content: space-between;
  height: 48px;
  padding: 0 3px 2px 7px;
  font: 15px/20px "Liberation Mono", monospace;
  flex: none;
}
.library .combo {
  width: 196px;
}
.library label {
  padding-top: 2px;
}
.layerbox {
  display: grid;
  grid-template: 1fr 26px / 1fr 26px;
  flex: 1;
  min-height: 0;
  border: 1px solid #828790;
  background: #efefef;
}
.layerview {
  overflow: hidden;
  background: #fff;
}
table {
  width: 100%;
  border-collapse: collapse;
  table-layout: fixed;
}
th {
  height: 35px;
  padding: 3px 0 0;
  font-weight: 700;
}
.fillcol {
  width: 79px;
  border-left: 1px solid #ddd;
}
td {
  height: 44px;
  padding: 0 7px 3px;
  border-bottom: 1px solid #d4d4d4;
}
.picked td {
  background: #efefef;
}
.picked td.fill,
.fill {
  padding: 1px 7px 0 8px;
  background: #000;
}
.swatch {
  display: block;
  height: 27px;
  border: 1px solid currentColor;
  background: currentColor;
  box-shadow: inset -1px -1px #000;
}
.vscroll,
.hscroll {
  display: flex;
}
.vscroll {
  flex-direction: column;
}
.vscroll button,
.hscroll button {
  width: 26px;
  height: 26px;
  line-height: 0;
  flex: none;
}
.vscroll button:last-child,
.hscroll button:last-child {
  margin: auto 0 0 auto;
}
.vscroll svg,
.hscroll svg {
  width: 12px;
  height: 8px;
  fill: none;
  stroke: #606060;
  stroke-width: 3;
}
.hscroll svg {
  width: 8px;
  height: 12px;
}
.thumb {
  background: #cdcdcd;
}
.layerbox .vscroll .thumb {
  width: 24px;
  height: 71%;
  margin-left: 1px;
}
.layerbox .hscroll .thumb {
  width: 154px;
  height: 24px;
  margin-left: 1px;
}
.tabs {
  display: flex;
  align-items: flex-start;
  height: 35px;
  padding-left: 4px;
  font: 15px/20px "Liberation Mono", monospace;
  flex: none;
}
.tabs button {
  width: 74px;
  height: 31px;
  padding-top: 4px;
  border: 1px solid #d9d9d9;
  border-top: 0;
}
.tabs .on {
  width: 94px;
  height: 34px;
  padding-left: 2px;
  background: #fff;
}
.canvas {
  display: grid;
  grid-template: 1fr 27px / 1fr 26px;
  flex: 1;
  min-width: 0;
  margin: 0 6px 0 7px;
}
.drawing {
  width: 100%;
  height: 100%;
  background: #000;
}
.canvas .vscroll .thumb {
  width: 24px;
  height: 56%;
  margin-top: 28px;
}
.canvas .hscroll .thumb {
  width: 100px;
  height: 24px;
  margin: 1px 0 0 242px;
}
.canvas .vscroll {
  padding-top: 2px;
}
.right {
  display: flex;
  flex-direction: column;
  width: 505px;
  flex: none;
  padding-top: 1px;
}
.right .dockhead {
  border-right: 0;
}
.props {
  flex: 1;
  margin: 8px 0 7px;
  padding: 7px 0 0 158px;
  border: solid #828790;
  border-width: 1px 0 1px 1px;
  background: #fff;
}
.right .helphead {
  padding-left: 158px;
}
.helptext {
  height: 192px;
  margin-top: 8px;
  padding: 8px 0 0 9px;
  overflow: hidden;
  border: solid #828790;
  border-width: 1px 0 1px 1px;
  background: #fff;
  font: 15px/22px "Liberation Mono", monospace;
  white-space: nowrap;
  flex: none;
}
.helptext p {
  margin: 0;
}
.check {
  display: flex;
  align-items: center;
  gap: 6px;
  font: 15px/20px "Liberation Mono", monospace;
}
.check span {
  padding-top: 3px;
}
.right .check {
  height: 35px;
  padding-top: 4px;
}
.check input {
  width: 20px;
  height: 20px;
  margin: 0;
  border: 1px solid #333;
  background: #fff;
  appearance: none;
  flex: none;
}
.check input:checked::after {
  content: "";
  display: block;
  width: 6px;
  height: 12px;
  margin: 1px 0 0 6px;
  border: solid #333;
  border-width: 0 2px 2px 0;
  transform: rotate(42deg);
}
.status {
  display: flex;
  height: 51px;
  padding: 2px 0 5px;
  border-bottom: 1px solid #a0a0a0;
  line-height: 46px;
  white-space: nowrap;
  flex: none;
}
.status span {
  padding-left: 13px;
  border-right: 1px solid #d4d4d4;
  flex: none;
}
.status .hint {
  width: 468px;
  padding-left: 9px;
}
.status .items {
  width: 202px;
}
.status .blank {
  flex: 1;
}
.status .layer {
  width: 136px;
  color: #f00;
}
.status .coord {
  width: 214px;
}
.status .unit {
  width: 19px;
  overflow: hidden;
  border: 0;
}
.edge {
  height: 10px;
  border-bottom: 2px solid #333;
  background: #fff;
  flex: none;
}
.dialog {
  position: absolute;
  left: 417px;
  top: 308px;
  width: 702px;
  border: 1px solid #555;
  background: #efefef;
  font: 15px/20px "Liberation Mono", monospace;
}
.dialog header {
  display: flex;
  align-items: center;
  gap: 5px;
  height: 44px;
  padding: 0 16px 2px 11px;
  background: #fff;
  font: 18px/24px "Noto Sans", sans-serif;
}
.dialog header span {
  flex: 1;
}
.dialog header button {
  line-height: 0;
}
form {
  display: flex;
  flex-direction: column;
  padding: 34px 19px 19px 18px;
}
.line {
  display: flex;
  gap: 13px;
  margin: 24px 0 26px;
}
.line .combo,
.line input {
  flex: 1;
  min-width: 0;
  height: 38px;
}
.line input {
  padding: 0 9px 0 1px;
  border: 1px solid #7a7a7a;
  background: #fff;
  color: #000;
  font: inherit;
}
.push {
  width: 110px;
  height: 32px;
  padding-top: 2px;
  border: 1px solid #adadad;
  background: #e1e1e1;
}
.line .push {
  width: 146px;
  margin-top: 5px;
}
.push.focus {
  border: 2px solid #0078d7;
}
form .line + .check {
  height: 22px;
  margin-top: -13px;
}
hr {
  width: 100%;
  height: 2px;
  margin: 15px 0 17px;
  border: 0;
  border-top: 1px solid #a0a0a0;
  background: #fff;
}
.actions {
  display: flex;
  justify-content: center;
  gap: 90px;
}
.watermark {
  position: absolute;
  right: 16px;
  bottom: 5px;
  color: #a4a4a4;
  font: 20px/28px Roboto, "Noto Sans CJK SC", sans-serif;
  text-shadow: 1px 1px #fff;
}
</style>
